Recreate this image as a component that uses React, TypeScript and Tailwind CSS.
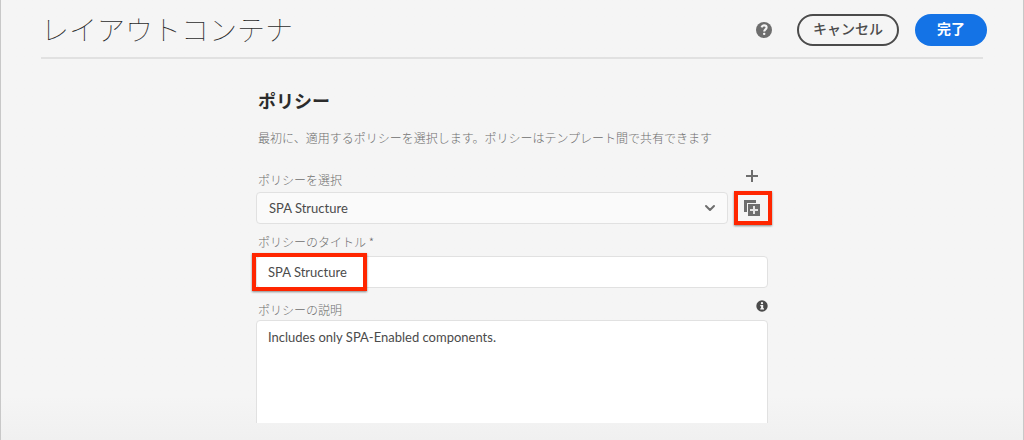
import React from "react";

function HelpIcon() {
  return (
    <svg viewBox="0 0 16 16" className="size-4" aria-hidden="true">
      <circle cx="8" cy="8" r="8" fill="#6e6e6e" />
      <path
        d="M5.500 5.300C6 3.900 7 3.400 8.100 3.400c1.500 0 2.500.9 2.500 2.100 0 1.900-2.400 1.900-2.400 4"
        fill="none"
        stroke="#f5f5f5"
        strokeWidth="2.100"
      />
      <rect x="7" y="10.700" width="2.400" height="2.400" rx="1" fill="#f5f5f5" />
    </svg>
  );
}

function PlusIcon() {
  return (
    <svg viewBox="0 0 12 12" className="size-3" aria-hidden="true">
      <path d="M5 0h2v5h5v2H7v5H5V7H0V5h5z" fill="#6e6e6e" />
    </svg>
  );
}

function DuplicateIcon() {
  return (
    <svg viewBox="0 0 16 16" className="size-4" aria-hidden="true">
      <path d="M0 0h12v3H3v9H0z" fill="#6e6e6e" />
      <path d="M4 4h12v12H4z" fill="#6e6e6e" />
      <path d="M9 6h2v3h3v2h-3v3H9v-3H6V9h3z" fill="#e4e4e4" />
    </svg>
  );
}

function InfoIcon() {
  return (
    <svg viewBox="0 0 12 12" className="size-3" aria-hidden="true">
      <circle cx="6" cy="6" r="5.700" fill="#4b4b4b" />
      <path d="M4.300 5h2.900v3.300h.8v1.300H4.300V8.300h.8V6.200h-.8z" fill="#f5f5f5" />
      <circle cx="6" cy="3.200" r="1.150" fill="#f5f5f5" />
    </svg>
  );
}

const highlight =
  "pointer-events-none absolute border-4 border-[#ff2600] shadow-[0_1px_2px_rgba(0,0,0,0.45)]";
const label = "pl-0.5 text-xs leading-4 font-light text-[#6e6e6e]";
const field =
  "w-full rounded-sm border border-[#e1e1e1] font-[Lato,sans-serif] text-[13px] leading-5";

export default function App() {
  return (
    <div className="flex h-screen flex-col border-x border-[#c8c8c8] bg-[#f5f5f5] bg-linear-to-b from-[#f5f5f5] from-90% to-[#f0f0f0] font-['Noto_Sans_CJK_JP',sans-serif] text-[#4b4b4b]">
      <header className="px-10">
        <div className="-mr-1 flex h-[57px] items-center pt-0.5">
          <h1 className="flex-1 pb-0.5 text-[28px] leading-10 font-thin text-[#2c2c2c]">
            レイアウトコンテナ
          </h1>
          <button type="button" aria-label="ヘルプ" className="mr-[25px]">
            <HelpIcon />
          </button>
          <button
            type="button"
            className="mr-4 h-8 rounded-full border-2 border-[#4b4b4b] px-3.5 pb-1 text-sm leading-6 font-medium"
          >
            キャンセル
          </button>
          <button
            type="button"
            className="h-8 w-[72px] rounded-full bg-[#1473e6] pb-1 text-sm leading-6 font-bold text-white"
          >
            完了
          </button>
        </div>
        <hr className="border-t-2 border-[#e1e1e1]" />
      </header>

      <main className="mb-[17px] min-h-0 flex-1 overflow-hidden">
        <form className="mx-auto flex w-full max-w-lg flex-col pt-[29px]">
          <h2 className="pl-0.5 text-lg leading-6 font-bold text-[#2c2c2c]">ポリシー</h2>
          <p className="mt-4 pl-0.5 text-xs leading-5 font-light text-[#6e6e6e]">
            最初に、適用するポリシーを選択します。ポリシーはテンプレート間で共有できます
          </p>

          <div className="mt-5 flex h-6 items-center justify-between">
            <label htmlFor="policy" className={label}>
              ポリシーを選択
            </label>
            <button type="button" aria-label="新規ポリシー" className="flex w-8 justify-center pb-2">
              <PlusIcon />
            </button>
          </div>
          <div className="flex gap-2">
            <div className="relative flex-1">
              <select id="policy" className={`${field} h-8 appearance-none bg-[#fafafa] px-3`}>
                <option>SPA Structure</option>
              </select>
              <svg
                viewBox="0 0 12 8"
                className="pointer-events-none absolute top-3 right-3 h-2 w-3"
                aria-hidden="true"
              >
                <path
                  d="M2 2l4 4 4-4"
                  fill="none"
                  stroke="#6e6e6e"
                  strokeWidth="2"
                  strokeLinecap="round"
                  strokeLinejoin="round"
                />
              </svg>
            </div>
            <button
              type="button"
              aria-label="ポリシーをコピー"
              className="relative flex size-8 items-center justify-center"
            >
              <DuplicateIcon />
              <span className={`${highlight} -top-px -right-1 -bottom-px -left-0.5`} />
            </button>
          </div>

          <label htmlFor="title" className={`${label} mt-2.5`}>
            ポリシーのタイトル *
          </label>
          <div className="relative mt-1.5">
            <input
              id="title"
              type="text"
              defaultValue="SPA Structure"
              className={`${field} block h-8 bg-white px-[11px]`}
            />
            <span className={`${highlight} -top-[3px] -left-1 h-[38px] w-[115px]`} />
          </div>

          <div className="mt-2.5 flex h-[22px] items-start justify-between">
            <label htmlFor="description" className={`${label} pt-1`}>
              ポリシーの説明
            </label>
            <button type="button" aria-label="情報" className="pt-0.5">
              <InfoIcon />
            </button>
          </div>
          <textarea
            id="description"
            defaultValue="Includes only SPA-Enabled components."
            className={`${field} h-32 resize-none bg-white px-[11px] py-1.5`}
          />
        </form>
      </main>
    </div>
  );
}
